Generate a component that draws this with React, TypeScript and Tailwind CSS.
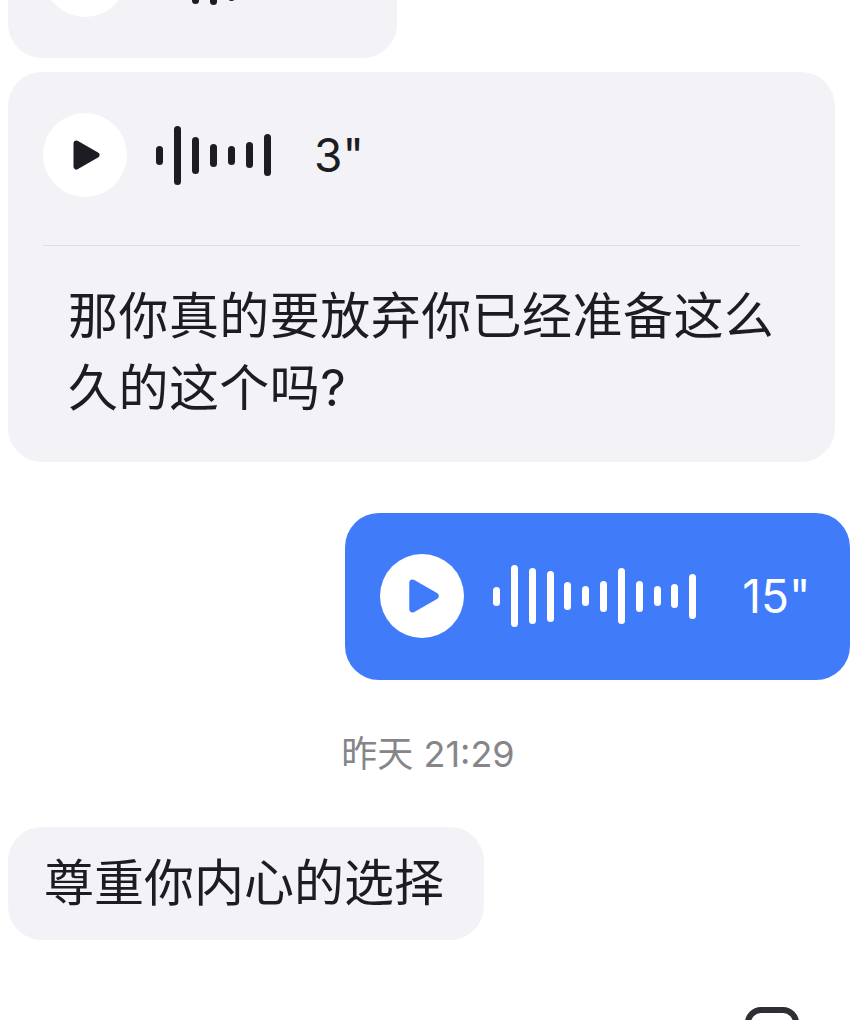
const greyBars = [19, 59, 37, 23, 19, 26, 42];
const blueBars = [19, 62, 56, 51, 28, 20, 31, 56, 31, 20, 24, 45];
const firstBars = [19, 40, 58, 60, 52, 30, 20];

const PlayIcon = ({ color, large }: { color: string; large?: boolean }) => (
  <svg width={large ? 32 : 27} height={large ? 34 : 30} viewBox="0 0 27 30" className="ml-[3px]">
    <path d="M3.5 3.5 L23.5 15 L3.5 26.5 Z" fill={color} stroke={color} strokeWidth="6" strokeLinejoin="round" />
  </svg>
);

const Voice = ({ bars, color, barClass, gapClass, textClass, label, large }: { bars: number[]; color: string; barClass: string; gapClass: string; textClass: string; label: string; large?: boolean }) => (
  <div className="flex h-[166px] items-center pl-[35px]">
    <div className="flex h-[84px] w-[84px] shrink-0 items-center justify-center rounded-full bg-white">
      <PlayIcon color={color} large={large} />
    </div>
    <div className={`ml-[29px] flex items-center ${gapClass}`}>
      {bars.map((h, i) => (
        <span key={i} className={`w-[7px] rounded-full ${barClass}`} style={{ height: h }} />
      ))}
    </div>
    <span className={`text-[46px] leading-none ${textClass}`}>{label}</span>
  </div>
);

export default function App() {
  return (
    <div className="h-[1020px] overflow-hidden bg-white font-['Inter','Noto_Sans_CJK_SC',sans-serif] text-[#1c1c22]">
      <div className="relative flex h-full flex-col pl-2 pr-[17px]">
        <div className="mt-[-108px] w-[389px] rounded-[34px] bg-[#f3f3f7]">
          <Voice bars={firstBars} color="#1c1c22" barClass="bg-[#1c1c22]" gapClass="gap-[11px]" textClass="ml-[43px]" label="" />
        </div>

        <div className="mt-[14px] w-[827px] rounded-[34px] bg-[#f3f3f7]">
          <Voice bars={greyBars} color="#1c1c22" barClass="bg-[#1c1c22]" gapClass="gap-[11px]" textClass="ml-[43px]" label={'3"'} />
          <div className="mx-[35px] mt-[7px] h-px bg-[#dedee2]" />
          <p className="px-[60px] pb-[38px] pt-[34px] text-[50px] leading-[72px] tracking-[0.45px]">
            那你真的要放弃你已经准备这么久的这个吗?
          </p>
        </div>

        <div className="mt-[51px] w-[505px] self-end rounded-[34px] bg-[#407cfa] pb-px text-white">
          <Voice bars={blueBars} color="#407cfa" barClass="bg-white" gapClass="gap-[10.85px]" textClass="ml-[46px]" label={'15"'} large />
        </div>

        <p className="mt-[53px] pr-[2px] text-center text-[36px] leading-[42px] text-[#85858a]">昨天 21:29</p>

        <div className="mt-[52px] flex h-[113px] w-[476px] items-center rounded-[34px] bg-[#f3f3f7] pl-[36px] text-[50px]">
          尊重你内心的选择
        </div>

        {/* icon cut off at the bottom edge */}
        <div className="absolute left-[745px] top-[1007px] h-[40px] w-[54px] rounded-[16px] border-[6px] border-[#2f2f33]" />
      </div>
    </div>
  );
}
